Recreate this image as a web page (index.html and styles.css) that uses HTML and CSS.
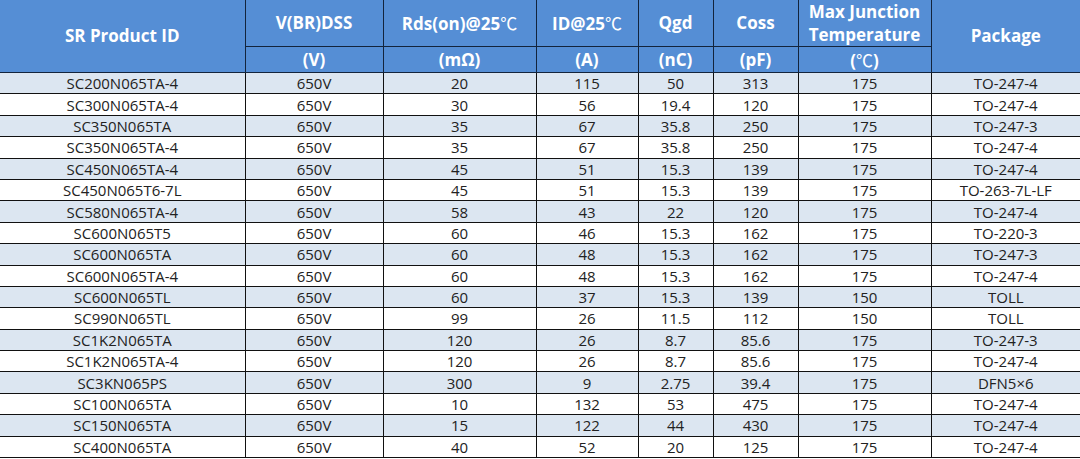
FILE: index.html
```html
<!DOCTYPE html>
<html>
<head>
<meta charset="utf-8">
<link rel="stylesheet" href="styles.css">
</head>
<body>
<table class="spec">
  <colgroup>
    <col class="c1"><col class="c2"><col class="c3"><col class="c4"><col class="c5"><col class="c6"><col class="c7"><col class="c8">
  </colgroup>
  <thead>
    <tr class="h1">
      <th rowspan="2">SR Product ID</th>
      <th>V(BR)DSS</th>
      <th>Rds(on)@25<span class="deg">℃</span></th>
      <th>ID@25<span class="deg">℃</span></th>
      <th>Qgd</th>
      <th>Coss</th>
      <th class="two">Max Junction Temperature</th>
      <th rowspan="2" class="last">Package</th>
    </tr>
    <tr class="h2">
      <th>(V)</th>
      <th>(mΩ)</th>
      <th>(A)</th>
      <th>(nC)</th>
      <th>(pF)</th>
      <th>(<span class="deg">℃</span>)</th>
    </tr>
  </thead>
  <tbody>
    <tr class="alt"><td>SC200N065TA-4</td><td>650V</td><td>20</td><td>115</td><td>50</td><td>313</td><td>175</td><td class="last">TO-247-4</td></tr>
    <tr><td>SC300N065TA-4</td><td>650V</td><td>30</td><td>56</td><td>19.4</td><td>120</td><td>175</td><td class="last">TO-247-4</td></tr>
    <tr class="alt"><td>SC350N065TA</td><td>650V</td><td>35</td><td>67</td><td>35.8</td><td>250</td><td>175</td><td class="last">TO-247-3</td></tr>
    <tr><td>SC350N065TA-4</td><td>650V</td><td>35</td><td>67</td><td>35.8</td><td>250</td><td>175</td><td class="last">TO-247-4</td></tr>
    <tr class="alt"><td>SC450N065TA-4</td><td>650V</td><td>45</td><td>51</td><td>15.3</td><td>139</td><td>175</td><td class="last">TO-247-4</td></tr>
    <tr><td>SC450N065T6-7L</td><td>650V</td><td>45</td><td>51</td><td>15.3</td><td>139</td><td>175</td><td class="last">TO-263-7L-LF</td></tr>
    <tr class="alt"><td>SC580N065TA-4</td><td>650V</td><td>58</td><td>43</td><td>22</td><td>120</td><td>175</td><td class="last">TO-247-4</td></tr>
    <tr><td>SC600N065T5</td><td>650V</td><td>60</td><td>46</td><td>15.3</td><td>162</td><td>175</td><td class="last">TO-220-3</td></tr>
    <tr class="alt"><td>SC600N065TA</td><td>650V</td><td>60</td><td>48</td><td>15.3</td><td>162</td><td>175</td><td class="last">TO-247-3</td></tr>
    <tr><td>SC600N065TA-4</td><td>650V</td><td>60</td><td>48</td><td>15.3</td><td>162</td><td>175</td><td class="last">TO-247-4</td></tr>
    <tr class="alt"><td>SC600N065TL</td><td>650V</td><td>60</td><td>37</td><td>15.3</td><td>139</td><td>150</td><td class="last">TOLL</td></tr>
    <tr><td>SC990N065TL</td><td>650V</td><td>99</td><td>26</td><td>11.5</td><td>112</td><td>150</td><td class="last">TOLL</td></tr>
    <tr class="alt"><td>SC1K2N065TA</td><td>650V</td><td>120</td><td>26</td><td>8.7</td><td>85.6</td><td>175</td><td class="last">TO-247-3</td></tr>
    <tr><td>SC1K2N065TA-4</td><td>650V</td><td>120</td><td>26</td><td>8.7</td><td>85.6</td><td>175</td><td class="last">TO-247-4</td></tr>
    <tr class="alt"><td>SC3KN065PS</td><td>650V</td><td>300</td><td>9</td><td>2.75</td><td>39.4</td><td>175</td><td class="last">DFN5×6</td></tr>
    <tr><td>SC100N065TA</td><td>650V</td><td>10</td><td>132</td><td>53</td><td>475</td><td>175</td><td class="last">TO-247-4</td></tr>
    <tr class="alt"><td>SC150N065TA</td><td>650V</td><td>15</td><td>122</td><td>44</td><td>430</td><td>175</td><td class="last">TO-247-4</td></tr>
    <tr><td>SC400N065TA</td><td>650V</td><td>40</td><td>52</td><td>20</td><td>125</td><td>175</td><td class="last">TO-247-4</td></tr>
  </tbody>
</table>
</body>
</html>
```

FILE: styles.css
```css
html, body {
  margin: 0;
  padding: 0;
  background: #ffffff;
}

body {
  font-family: "Open Sans", "Liberation Sans", sans-serif;
  color: #222222;
}

.spec {
  width: 1080px;
  border-collapse: collapse;
  table-layout: fixed;
}

.c1 { width: 245px; }
.c2 { width: 138px; }
.c3 { width: 153px; }
.c4 { width: 102px; }
.c5 { width: 75px; }
.c6 { width: 85px; }
.c7 { width: 133px; }
.c8 { width: 149px; }

.spec th {
  background: #558ed5;
  color: #ffffff;
  font-weight: 700;
  font-size: 17px;
  line-height: 22px;
  padding: 0;
  text-align: center;
  vertical-align: middle;
  border: 1px solid #13243c;
  border-top: none;
}

.spec th:first-child {
  border-left: none;
}

.spec .deg {
  font-family: "Noto Sans CJK SC", sans-serif;
  font-weight: 400;
}

.spec .h1 th {
  height: 46px;
}

.spec .h2 th {
  height: 24px;
  padding-top: 1px;
}

.spec .two {
  line-height: 23px;
}

.spec td {
  height: 20.4px;
  padding: 0;
  font-size: 15px;
  line-height: 18px;
  text-align: center;
  vertical-align: middle;
  border: 1px solid #111111;
  white-space: nowrap;
}

.spec td:first-child {
  border-left: none;
}

.spec .last {
  border-right: none;
}

.spec .alt td {
  background: #dce6f1;
}
```
